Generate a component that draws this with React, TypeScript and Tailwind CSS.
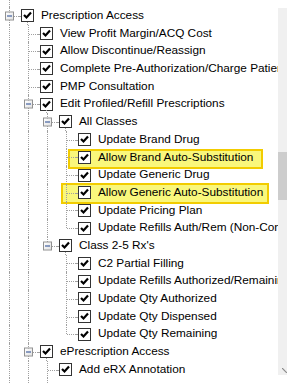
import React from "react";

// one cell of the tree gutter
type Guide = "none" | "full" | "tee" | "ell";

type Row = {
  level: number;
  label: string;
  guides: Guide[];
  own: Guide;
  expander?: boolean;
  open?: boolean;
  mark?: "brand" | "generic";
};

const rows: Row[] = [
  { level: 0, label: "Prescription Access", guides: [], own: "full", expander: true, open: true },
  { level: 1, label: "View Profit Margin/ACQ Cost", guides: ["full"], own: "tee" },
  { level: 1, label: "Allow Discontinue/Reassign", guides: ["full"], own: "tee" },
  { level: 1, label: "Complete Pre-Authorization/Charge Patient Account", guides: ["full"], own: "tee" },
  { level: 1, label: "PMP Consultation", guides: ["full"], own: "tee" },
  { level: 1, label: "Edit Profiled/Refill Prescriptions", guides: ["full"], own: "tee", expander: true, open: true },
  { level: 2, label: "All Classes", guides: ["full", "full"], own: "tee", expander: true, open: true },
  { level: 3, label: "Update Brand Drug", guides: ["full", "full", "full"], own: "tee" },
  { level: 3, label: "Allow Brand Auto-Substitution", guides: ["full", "full", "full"], own: "tee", mark: "brand" },
  { level: 3, label: "Update Generic Drug", guides: ["full", "full", "full"], own: "tee" },
  { level: 3, label: "Allow Generic Auto-Substitution", guides: ["full", "full", "full"], own: "tee", mark: "generic" },
  { level: 3, label: "Update Pricing Plan", guides: ["full", "full", "full"], own: "tee" },
  { level: 3, label: "Update Refills Auth/Rem (Non-Controlled)", guides: ["full", "full", "full"], own: "ell" },
  { level: 2, label: "Class 2-5 Rx's", guides: ["full", "full"], own: "ell", expander: true, open: true },
  { level: 3, label: "C2 Partial Filling", guides: ["full", "full", "none"], own: "tee" },
  { level: 3, label: "Update Refills Authorized/Remaining", guides: ["full", "full", "none"], own: "tee" },
  { level: 3, label: "Update Qty Authorized", guides: ["full", "full", "none"], own: "tee" },
  { level: 3, label: "Update Qty Dispensed", guides: ["full", "full", "none"], own: "tee" },
  { level: 3, label: "Update Qty Remaining", guides: ["full", "full", "none"], own: "ell" },
  { level: 1, label: "ePrescription Access", guides: ["full"], own: "tee", expander: true, open: true },
  { level: 2, label: "Add eRX Annotation", guides: ["full", "full"], own: "tee" },
];

const GuideCell = ({ kind, expander }: { kind: Guide; expander?: boolean }) => (
  <div className="relative w-[19px] h-full shrink-0">
    {(kind === "full" || kind === "tee") && (
      <div className="absolute left-[9px] top-0 bottom-0 border-l border-dotted border-[#a0a0a0]" />
    )}
    {kind === "ell" && (
      <div className="absolute left-[9px] top-0 h-1/2 border-l border-dotted border-[#a0a0a0]" />
    )}
    {(kind === "tee" || kind === "ell" || expander) && (
      <div className="absolute left-[10px] right-0 top-1/2 border-t border-dotted border-[#a0a0a0]" />
    )}
    {expander && (
      <span className="absolute left-[5px] top-1/2 -translate-y-1/2 w-[9px] h-[9px] border border-[#919191] bg-linear-to-br from-white to-[#e2e2e2] flex items-center justify-center">
        <span className="w-[5px] h-px bg-[#23468f]" />
      </span>
    )}
  </div>
);

const Check = () => (
  <span className="relative w-[13px] h-[13px] border border-[#333] bg-white flex items-center justify-center">
    <svg width="9" height="9" viewBox="0 0 9 9">
      <path d="M1 4 L3.5 6.5 L8 1.5" stroke="#000" strokeWidth="2.2" fill="none" />
    </svg>
  </span>
);

const TreeRow = ({ row }: { row: Row }) => (
  <div className="relative flex h-[17.7px]">
    {row.mark === "brand" && (
      <div className="absolute left-[68px] w-[195px] top-[0px] h-[20px] bg-[#f9f77c] border-2 border-[#f2cc00]" />
    )}
    {row.mark === "generic" && (
      <div className="absolute left-[61px] w-[208px] -top-[1px] h-[21px] bg-[#f9f77c] border-2 border-[#f2cc00]" />
    )}
    {row.guides.map((g, i) => (
      <GuideCell key={i} kind={g} />
    ))}
    <GuideCell kind={row.own} expander={row.expander} />
    <div className="relative w-[19px] h-full shrink-0 flex items-center">
      <div className="absolute left-0 w-[2px] top-1/2 border-t border-dotted border-[#a0a0a0]" />
      <span className="ml-[2px]">
        <Check />
      </span>
      {row.open && (
        <div className="absolute left-[8px] top-[15px] bottom-0 border-l border-dotted border-[#a0a0a0]" />
      )}
    </div>
    <span className="relative pl-[3px] leading-[17.7px]">{row.label}</span>
  </div>
);

export default function App() {
  return (
    <div className="w-[294px] h-[383px] bg-white flex overflow-hidden font-['Liberation_Sans',Arial,sans-serif] text-[11.8px] text-black">
      <div className="w-[278px] shrink-0 overflow-hidden whitespace-nowrap flex flex-col">
        <div className="flex h-[7px]">
          <GuideCell kind="full" />
        </div>
        {rows.map((r, i) => (
          <TreeRow key={i} row={r} />
        ))}
        <div className="flex flex-1">
          <GuideCell kind="full" />
          <GuideCell kind="full" />
          <GuideCell kind="full" />
        </div>
      </div>
      <div className="relative w-[9px] my-[8px] bg-[#f0f0f0]">
        <div className="mt-[144px] h-[48px] bg-[#cdcdcd]" />
        <svg className="absolute left-[4px] bottom-[2px]" width="5" height="5" viewBox="0 0 5 5">
          <path d="M0 0 L5 5" stroke="#8a8a8a" strokeWidth="1.2" />
        </svg>
      </div>
    </div>
  );
}
